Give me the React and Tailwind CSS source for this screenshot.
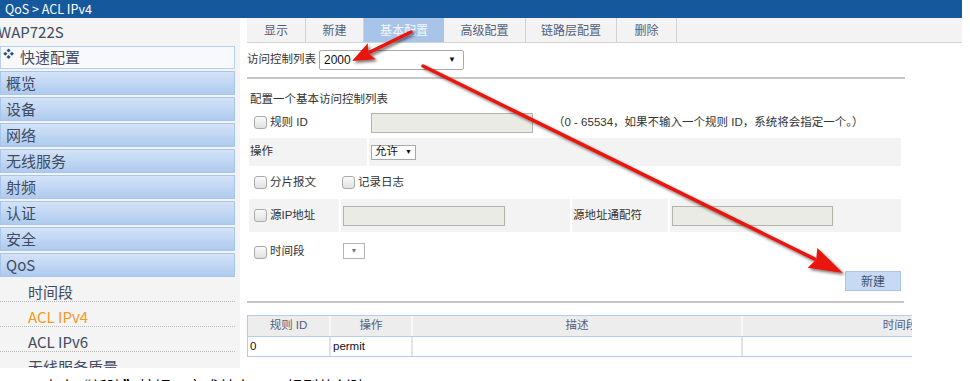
import React from "react";

const cjk = { fontFamily: '"Noto Sans CJK SC", "Noto Sans", sans-serif' };
const arial = { fontFamily: '"Liberation Sans", "Noto Sans CJK SC", sans-serif' };

const navItems = ["概览", "设备", "网络", "无线服务", "射频", "认证", "安全", "QoS"];
const subItems = [
  { label: "时间段" },
  { label: "ACL IPv4", active: true },
  { label: "ACL IPv6" },
  { label: "无线服务质量" },
];

const tabs = [
  { label: "显示", w: "w-[59px]" },
  { label: "新建", w: "w-[58px]" },
  { label: "基本配置", w: "w-[80px]", active: true },
  { label: "高级配置", w: "w-[82px]" },
  { label: "链路层配置", w: "w-[91px]" },
  { label: "删除", w: "w-[60px]" },
];

function Check() {
  return (
    <span className="inline-block w-[13px] h-[13px] shrink-0 rounded-[3px] border border-[#a9a9a9] bg-gradient-to-b from-[#fafafa] to-[#e1e1e1]" />
  );
}

function TextBox({ w }) {
  return <span className={`block ${w} h-[20px] border border-[#b3b3ab] bg-[#ebebe5]`} />;
}

// arrow polygon points from tail to tip
function arrowParts(x1, y1, x2, y2, len, half) {
  const dx = x2 - x1;
  const dy = y2 - y1;
  const l = Math.hypot(dx, dy);
  const ux = dx / l;
  const uy = dy / l;
  const bx = x2 - ux * len;
  const by = y2 - uy * len;
  const nx = -uy;
  const ny = ux;
  return {
    line: { x1, y1, x2: bx + ux * 2, y2: by + uy * 2 },
    head: `${x2},${y2} ${bx + nx * half},${by + ny * half} ${bx + ux * 4},${by + uy * 4} ${bx - nx * half},${by - ny * half}`,
  };
}

function Arrows() {
  const a1 = arrowParts(411, 32, 352, 61, 22, 9);
  const a2 = arrowParts(423, 66, 843, 273, 34, 11);
  return (
    <svg className="absolute left-0 top-0 pointer-events-none" width="970" height="381">
      <defs>
        <filter id="sh" x="-20%" y="-20%" width="140%" height="140%">
          <feDropShadow dx="2" dy="2" stdDeviation="1.6" floodColor="#000" floodOpacity="0.55" />
        </filter>
      </defs>
      {[a1, a2].map((a, i) => (
        <g key={i} filter="url(#sh)">
          <line {...a.line} stroke="#e8160e" strokeWidth="3.5" strokeLinecap="round" />
          <polygon points={a.head} fill="#e8160e" />
        </g>
      ))}
    </svg>
  );
}

export default function App() {
  return (
    <div className="relative w-[970px] h-[381px] overflow-hidden bg-white">
      <div className="w-[962px]">
        {/* title bar */}
        <div className="h-[18px] bg-[#15589b] text-white text-[12.5px] leading-[18px] pl-[5px]" style={cjk}>
          QoS &gt; ACL IPv4
        </div>

        <div className="flex h-[350px]">
          {/* sidebar */}
          <aside className="w-[240px] h-[350px] overflow-hidden bg-[#f4f4f4] text-[#3f4b63] pr-[5px]" style={cjk}>
            <div className="h-[28px] flex items-center text-[15px] -ml-[2px]">WAP722S</div>
            <div className="h-[23px] flex items-center border border-[#b6d0ef] bg-[#f7f9fc] text-[15px]">
              <span className="text-[11px] leading-[11px] text-[#2a4c86] self-start mt-[1px] ml-[2px] w-[17px]">❖</span>
              快速配置
            </div>
            <div className="mt-[2px] flex flex-col gap-[2px]">
              {navItems.map((n) => (
                <div
                  key={n}
                  className="h-[24px] flex items-center pl-[5px] text-[15px] border border-[#a8c6ec] bg-gradient-to-b from-[#d3e3f8] via-[#c1d7f3] to-[#adcaee]"
                >
                  {n}
                </div>
              ))}
            </div>
            <div>
              {subItems.map((s) => (
                <div
                  key={s.label}
                  className={`h-[25px] pl-[28px] pt-[5px] leading-[19px] text-[15px] border-b border-dotted border-[#b9b9b9] ${
                    s.active ? "text-[#f39a1f]" : "text-[#3f4b63]"
                  }`}
                >
                  {s.label}
                </div>
              ))}
            </div>
          </aside>

          {/* main */}
          <main className="flex-1 pl-[7px] text-[11.5px] text-[#333]" style={arial}>
            <div className="h-[25px] flex bg-[#f3f3f3] border-b border-[#d4d4d4]" style={cjk}>
              {tabs.map((t) => (
                <div
                  key={t.label}
                  className={`${t.w} h-[24px] flex items-center justify-center text-[12px] ${
                    t.active ? "bg-[#a8c4e9] text-[#f4f7fb]" : "text-[#53617e] border-r border-[#d2d2d2]"
                  }`}
                >
                  {t.label}
                </div>
              ))}
            </div>

            <div className="mt-[7px] h-[20px] flex items-center">
              <span>访问控制列表</span>
              <div className="ml-[3px] w-[145px] h-[20px] flex items-center justify-between border border-[#a9a9a9] rounded-[2px] bg-white px-[4px] text-[12px] text-[#111]">
                <span>2000</span>
                <span className="text-[8px] mr-[3px]">▼</span>
              </div>
            </div>

            <div className="mt-[7px] w-[658px] h-[2px] bg-[#c6c6c6]" />

            <div className="mt-[13px] h-[14px] leading-[14px] pl-[3px]">配置一个基本访问控制列表</div>

            <div className="mt-[1px] ml-[2px] w-[652px]">
              <div className="h-[31px] flex items-center">
                <div className="w-[120px] pl-[5px] flex items-center gap-[3px]">
                  <Check />
                  <span>规则 ID</span>
                </div>
                <div className="ml-[2px]">
                  <TextBox w="w-[162px]" />
                </div>
                <span className="ml-[20px]">（0 - 65534，如果不输入一个规则 ID，系统将会指定一个。）</span>
              </div>

              <div className="h-[28px] flex gap-[2px]">
                <div className="w-[118px] bg-[#f3f3f3] flex items-center pl-[1px]">操作</div>
                <div className="flex-1 bg-[#f3f3f3] flex items-center pl-[2px]">
                  <div className="w-[45px] h-[15px] flex items-center justify-between border border-[#a9a9a9] bg-white px-[3px] text-[11.5px] text-[#111]">
                    <span>允许</span>
                    <span className="text-[7px]">▼</span>
                  </div>
                </div>
              </div>

              <div className="h-[33px] flex items-center">
                <div className="w-[93px] pl-[5px] flex items-center gap-[3px]">
                  <Check />
                  <span>分片报文</span>
                </div>
                <div className="flex items-center gap-[3px]">
                  <Check />
                  <span>记录日志</span>
                </div>
              </div>

              <div className="h-[33px] flex gap-[2px]">
                <div className="w-[90px] bg-[#f3f3f3] pl-[5px] flex items-center gap-[3px]">
                  <Check />
                  <span>源IP地址</span>
                </div>
                <div className="w-[229px] bg-[#f3f3f3] flex items-center pl-[2px]">
                  <TextBox w="w-[162px]" />
                </div>
                <div className="w-[96px] bg-[#f3f3f3] flex items-center pl-[1px]">源地址通配符</div>
                <div className="flex-1 bg-[#f3f3f3] flex items-center pl-[2px]">
                  <TextBox w="w-[161px]" />
                </div>
              </div>

              <div className="h-[38px] flex items-center">
                <div className="w-[94px] pl-[5px] flex items-center gap-[3px] pt-[2px]">
                  <Check />
                  <span>时间段</span>
                </div>
                <div className="w-[22px] h-[16px] flex items-center justify-center border border-[#b3b3b3] bg-white text-[7px] text-[#777]">
                  ▼
                </div>
              </div>

              <div className="mt-[1px] flex justify-end">
                <div
                  className="w-[56px] h-[20px] flex items-center justify-center bg-[#c6daf3] border border-[#a9c5ea] text-[#44506a] text-[12px]"
                  style={cjk}
                >
                  新建
                </div>
              </div>
            </div>

            <div className="mt-[10px] w-[657px] h-[2px] bg-[#c6c6c6]" />

            <div className="mt-[12px] w-[665px] overflow-hidden">
              <div className="w-[1000px] border border-[#b5cdeb]">
                <div className="h-[21px] flex bg-[#ededed] border-b border-[#b5cdeb] text-[#53617e]">
                  <div className="w-[83px] border-r-2 border-[#f8f8f8] flex items-center justify-center">规则 ID</div>
                  <div className="w-[82px] border-r-2 border-[#f8f8f8] flex items-center justify-center">操作</div>
                  <div className="w-[330px] border-r-2 border-[#f8f8f8] flex items-center justify-center">描述</div>
                  <div className="w-[316px] border-r-2 border-[#f8f8f8] flex items-center justify-center">时间段</div>
                  <div className="flex-1" />
                </div>
                <div className="h-[19px] flex bg-white text-[#111]">
                  <div className="w-[83px] border-r-2 border-[#e3e3e3] flex items-center pl-[2px]">0</div>
                  <div className="w-[82px] border-r-2 border-[#e3e3e3] flex items-center pl-[2px]">permit</div>
                  <div className="w-[330px] border-r-2 border-[#e3e3e3]" />
                  <div className="w-[316px] border-r-2 border-[#e3e3e3]" />
                  <div className="flex-1" />
                </div>
              </div>
            </div>
          </main>
        </div>
      </div>

      <p className="pt-[6px] pl-[18px] text-[16px] leading-[24px] text-black" style={cjk}>
        2、点击“新建”按钮，完成基本 ACL 规则的创建。
      </p>

      <Arrows />
    </div>
  );
}
